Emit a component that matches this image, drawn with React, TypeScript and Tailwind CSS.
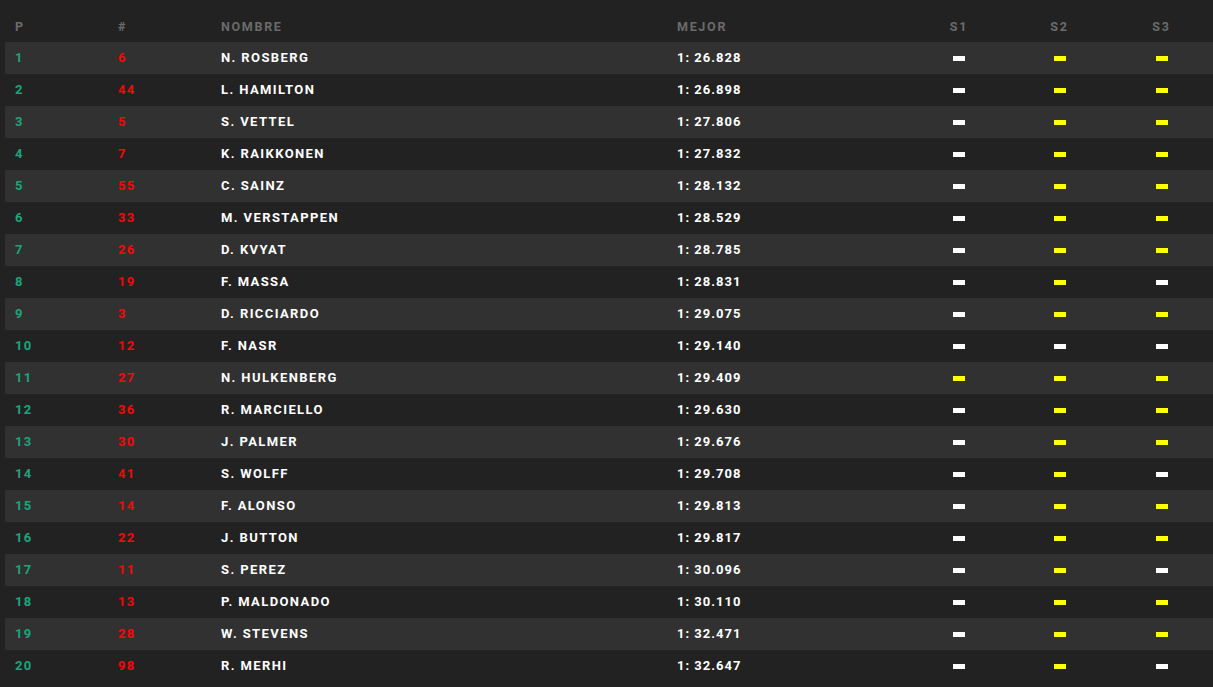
import React from 'react';

type Row = {
  pos: number;
  num: number;
  name: string;
  best: string;
  sectors: ('w' | 'y')[];
};

const ROWS: Row[] = [
  { pos: 1, num: 6, name: 'N. ROSBERG', best: '1: 26.828', sectors: ['w', 'y', 'y'] },
  { pos: 2, num: 44, name: 'L. HAMILTON', best: '1: 26.898', sectors: ['w', 'y', 'y'] },
  { pos: 3, num: 5, name: 'S. VETTEL', best: '1: 27.806', sectors: ['w', 'y', 'y'] },
  { pos: 4, num: 7, name: 'K. RAIKKONEN', best: '1: 27.832', sectors: ['w', 'y', 'y'] },
  { pos: 5, num: 55, name: 'C. SAINZ', best: '1: 28.132', sectors: ['w', 'y', 'y'] },
  { pos: 6, num: 33, name: 'M. VERSTAPPEN', best: '1: 28.529', sectors: ['w', 'y', 'y'] },
  { pos: 7, num: 26, name: 'D. KVYAT', best: '1: 28.785', sectors: ['w', 'y', 'y'] },
  { pos: 8, num: 19, name: 'F. MASSA', best: '1: 28.831', sectors: ['w', 'y', 'w'] },
  { pos: 9, num: 3, name: 'D. RICCIARDO', best: '1: 29.075', sectors: ['w', 'y', 'y'] },
  { pos: 10, num: 12, name: 'F. NASR', best: '1: 29.140', sectors: ['w', 'w', 'w'] },
  { pos: 11, num: 27, name: 'N. HULKENBERG', best: '1: 29.409', sectors: ['y', 'y', 'y'] },
  { pos: 12, num: 36, name: 'R. MARCIELLO', best: '1: 29.630', sectors: ['w', 'y', 'y'] },
  { pos: 13, num: 30, name: 'J. PALMER', best: '1: 29.676', sectors: ['w', 'y', 'y'] },
  { pos: 14, num: 41, name: 'S. WOLFF', best: '1: 29.708', sectors: ['w', 'y', 'w'] },
  { pos: 15, num: 14, name: 'F. ALONSO', best: '1: 29.813', sectors: ['w', 'y', 'y'] },
  { pos: 16, num: 22, name: 'J. BUTTON', best: '1: 29.817', sectors: ['w', 'y', 'y'] },
  { pos: 17, num: 11, name: 'S. PEREZ', best: '1: 30.096', sectors: ['w', 'y', 'w'] },
  { pos: 18, num: 13, name: 'P. MALDONADO', best: '1: 30.110', sectors: ['w', 'y', 'y'] },
  { pos: 19, num: 28, name: 'W. STEVENS', best: '1: 32.471', sectors: ['w', 'y', 'y'] },
  { pos: 20, num: 98, name: 'R. MERHI', best: '1: 32.647', sectors: ['w', 'y', 'w'] },
];

const GRID = 'grid grid-cols-[103px_103px_456px_232px_100px_101px_1fr]';

const SectorBar: React.FC<{ color: 'w' | 'y' }> = ({ color }) => (
  <span
    className={
      color === 'y'
        ? 'block w-[12px] h-[5px] bg-[#ffff00]'
        : 'block w-[12px] h-[5px] bg-[#ffffff]'
    }
  />
);

const App: React.FC = () => {
  return (
    <div className="min-h-[687px] w-full bg-[#222222] font-['Roboto',_'Liberation_Sans',_sans-serif] font-bold">
      <div className="ml-[5px]">
        {/* Header */}
        <div className={`${GRID} h-[42px] items-center pt-[12px] pl-[10px] text-[12.5px] tracking-[1.7px] text-[#6b6b6b]`}>
          <div>P</div>
          <div>#</div>
          <div>NOMBRE</div>
          <div>MEJOR</div>
          <div className="text-center">S1</div>
          <div className="text-center">S2</div>
          <div className="text-center">S3</div>
        </div>

        {/* Rows */}
        {ROWS.map((row, i) => (
          <div
            key={row.pos}
            className={`${GRID} h-[32px] items-center pl-[10px] text-[13px] tracking-[1.4px] ${
              i % 2 === 0 ? 'bg-[#313131]' : 'bg-[#222222]'
            }`}
          >
            <div className="text-[#1fa37c]">{row.pos}</div>
            <div className="text-[#f00a0a]">{row.num}</div>
            <div className="text-white">{row.name}</div>
            <div className="text-white tracking-[1px]">{row.best}</div>
            {row.sectors.map((s, j) => (
              <div key={j} className="flex justify-center">
                <SectorBar color={s} />
              </div>
            ))}
          </div>
        ))}
      </div>
    </div>
  );
};

export default App;
